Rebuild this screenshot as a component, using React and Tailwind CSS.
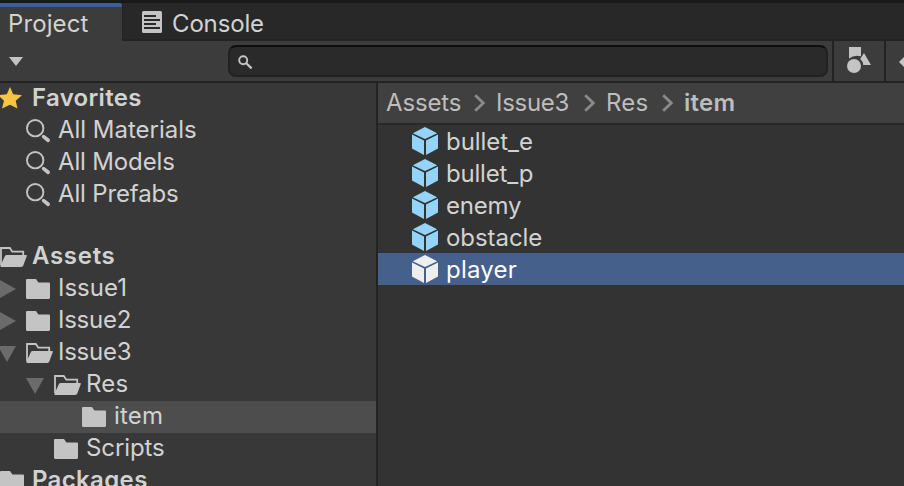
import React from 'react';

const Folder = () => (
  <svg width="24" height="20" viewBox="0 0 24 20" className="block shrink-0" fill="#c4c4c4">
    <path d="M1 0H10L12.4 3.6H23Q24 3.6 24 4.6V18.5Q24 20 22.5 20H1.5Q0 20 0 18.5V1Q0 0 1 0Z" />
  </svg>
);

const OpenFolder = () => (
  <svg width="27" height="20" viewBox="0 0 27 20" className="block shrink-0">
    <path d="M1 18V1H9.8L12.3 4.7H23.2V8" fill="none" stroke="#c4c4c4" strokeWidth="1.8" />
    <path d="M6.7 8H26Q27.2 8 26.8 9.1L23.3 18.6Q22.8 20 21.3 20H1.5Q0 20 .4 18.8L4.8 9.2Q5.4 8 6.7 8Z" fill="#c4c4c4" />
  </svg>
);

const Search = () => (
  <svg width="25" height="25" viewBox="0 0 25 25" className="block shrink-0" fill="none" stroke="#c4c4c4">
    <circle cx="9.2" cy="9.2" r="8.2" strokeWidth="1.9" />
    <path d="M17.6 17.6L22.1 21.3" strokeWidth="3.7" strokeLinecap="round" />
  </svg>
);

const Star = () => (
  <svg width="22" height="22" viewBox="0 0 22 22" className="block shrink-0" fill="#f7c443">
    <path d="M10 0L13.2 7.2L22 8.2L15.7 13.7L17.5 21.6L10 17.7L2 21.6L4 13.7L-2 8.2L6.8 7.2Z" />
  </svg>
);

const Cube = ({ color }) => (
  <svg width="26" height="28" viewBox="0 0 26 28" className="block shrink-0" fill={color}>
    <path d="M13 0L25.2 6.2L13 12.1L.8 6.2Z" />
    <path d="M0 7.6L12 13.6V28L0 21.6Z" />
    <path d="M26 7.6L14 13.6V28L26 21.6Z" />
  </svg>
);

const Chevron = () => (
  <svg width="12" height="18" viewBox="0 0 12 18" className="mt-[11px] block shrink-0" fill="none" stroke="#8a8a8a" strokeWidth="2.8">
    <path d="M1.2 1.2L9.3 9L1.2 16.8" />
  </svg>
);

const Arrow = ({ open }) =>
  open ? (
    <svg width="18" height="16" viewBox="0 0 18 16" className="block shrink-0" fill="#6b6b6b"><path d="M0 0H18L9 16Z" /></svg>
  ) : (
    <svg width="16" height="18" viewBox="0 0 16 18" className="block shrink-0" fill="#6b6b6b"><path d="M0 0L16 9L0 18Z" /></svg>
  );

const TreeRow = ({ icon, label, pad, iconTop = 'pt-[6px]', arrow, text = '', selected }) => (
  <div className={`flex h-8 shrink-0 items-start ${selected ? 'bg-[#4d4d4d]' : ''}`}>
    <div className={`flex shrink-0 items-start ${pad}`}>
      {arrow}
      <div className={`ml-auto flex w-8 shrink-0 ${iconTop}`}>{icon}</div>
    </div>
    <span className={`whitespace-nowrap leading-[30px] ${text}`}>{label}</span>
  </div>
);

const files = [
  ['bullet_e', 'tracking-[-0.05px]'],
  ['bullet_p', 'tracking-[-0.2px]'],
  ['enemy', 'tracking-[-0.2px]'],
  ['obstacle', 'tracking-[-0.05px]'],
  ['player', 'tracking-[0.2px]'],
];

export default function App() {
  return (
    <div className="flex h-[486px] w-[904px] flex-col overflow-hidden bg-[#383838] font-['Inter',sans-serif] text-[24px] text-[#d2d2d2]">
      <div className="h-[3px] shrink-0 bg-[#191919]" />
      <div className="flex h-[38px] shrink-0 bg-[#282828]">
        <div className="w-[123px] shrink-0 overflow-hidden rounded-tr-[3px] border-r border-[#232323] bg-[#3c3c3c]">
          <div className="h-1 bg-[#3a5f90]" />
          <div className="pl-2 leading-[33px] tracking-[0.1px]">Project</div>
        </div>
        <div className="flex grow border-b-2 border-[#232323]">
          <svg width="20" height="22" viewBox="0 0 20 22" className="ml-[19px] mt-2 block">
            <rect width="20" height="22" rx="1.5" fill="#c4c4c4" />
            <path d="M2 5H14M2 9H18M2 13H14M2 17H18" stroke="#282828" strokeWidth="2" />
          </svg>
          <span className="ml-[10px] leading-[41px] tracking-[-0.15px]">Console</span>
        </div>
      </div>
      <div className="flex h-[42px] shrink-0 border-b-2 border-[#232323] bg-[#3c3c3c]">
        <svg width="14" height="9" viewBox="0 0 14 9" className="ml-[9px] mt-4 block shrink-0"><path d="M0 0H14L7 9Z" fill="#c4c4c4" /></svg>
        <div className="ml-[205px] mt-1 h-8 w-[600px] shrink-0 rounded-[8px] border-2 border-[#212121] border-t-[#0d0d0d] bg-[#2a2a2a]">
          <svg width="15" height="15" viewBox="0 0 15 15" className="ml-2 mt-2 block" fill="none" stroke="#c4c4c4">
            <circle cx="5.2" cy="5.2" r="4" strokeWidth="1.9" />
            <path d="M8 8L13.6 13.4" strokeWidth="2.3" />
          </svg>
        </div>
        <div className="ml-1 h-10 w-[54px] shrink-0 border-x-2 border-[#232323]">
          <svg width="25" height="27" viewBox="0 0 25 27" className="ml-[13px] mt-[6px] block">
            <path d="M2 0H14V9.3Q7 7.5 2 11.5ZM17 6L24 18H16.3Q15.8 14 13.2 12Z" fill="#c4c4c4" />
            <circle cx="7" cy="19" r="7" fill="#c4c4c4" />
          </svg>
        </div>
        <svg width="18" height="14" viewBox="0 0 18 14" className="ml-[13px] mt-[14px] block shrink-0"><path d="M0 7L7 0H18V14H7Z" fill="#c4c4c4" /></svg>
      </div>
      <div className="flex min-h-0 grow">
        <div className="flex w-[376px] shrink-0 flex-col overflow-hidden">
          <TreeRow pad="w-8" iconTop="pt-1" icon={<Star />} label="Favorites" text="font-semibold tracking-[0.3px]" />
          <TreeRow pad="w-[58px]" iconTop="pt-1" icon={<Search />} label="All Materials" text="tracking-[-0.02px]" />
          <TreeRow pad="w-[58px]" iconTop="pt-1" icon={<Search />} label="All Models" text="tracking-[-0.15px]" />
          <TreeRow pad="w-[58px]" iconTop="pt-1" icon={<Search />} label="All Prefabs" text="tracking-[-0.15px]" />
          <div className="h-[30px] shrink-0" />
          <TreeRow pad="w-8" iconTop="pt-[6px] -ml-[2px]" icon={<OpenFolder />} label="Assets" text="font-semibold tracking-[0.7px]" />
          <TreeRow pad="w-[58px]" arrow={<div className="pt-[7px]"><Arrow /></div>} icon={<Folder />} label="Issue1" />
          <TreeRow pad="w-[58px]" arrow={<div className="pt-[7px]"><Arrow /></div>} icon={<Folder />} label="Issue2" text="tracking-[-0.25px]" />
          <TreeRow pad="w-[58px]" arrow={<div className="-ml-[2px] pt-[9px]"><Arrow open /></div>} icon={<OpenFolder />} label="Issue3" text="tracking-[-0.25px]" />
          <TreeRow pad="w-[86px]" arrow={<div className="pl-[26px] pt-[9px]"><Arrow open /></div>} icon={<OpenFolder />} label="Res" text="tracking-[0.2px]" />
          <TreeRow pad="w-[114px]" icon={<Folder />} label="item" text="tracking-[0.2px]" selected />
          <TreeRow pad="w-[86px]" icon={<Folder />} label="Scripts" text="tracking-[-0.1px]" />
          <TreeRow pad="w-8" iconTop="pt-[6px] -ml-[2px]" icon={<Folder />} label="Packages" text="font-semibold tracking-[0.35px]" />
        </div>
        <div className="flex min-w-0 grow flex-col border-l-2 border-[#232323] bg-[#333333]">
          <div className="flex h-[42px] shrink-0 border-b-2 border-[#282828] bg-[#404040] pl-2 leading-[40px] text-[#bdbdbd]">
            <span className="w-[88px] shrink-0 tracking-[-0.15px]">Assets</span>
            <Chevron />
            <span className="ml-[10px] w-[88px] shrink-0 tracking-[-0.3px]">Issue3</span>
            <Chevron />
            <span className="ml-[10px] w-[56px] shrink-0 tracking-[0.2px]">Res</span>
            <Chevron />
            <span className="ml-[10px] font-semibold tracking-[0.3px]">item</span>
          </div>
          {files.map(([name, track]) => (
            <div key={name} className={`flex h-8 shrink-0 pl-[34px] ${name === 'player' ? 'bg-[#46608c] text-white' : ''}`}>
              <div className="w-[34px] shrink-0 pt-[2px]"><Cube color={name === 'player' ? '#eeeeee' : '#94d4fa'} /></div>
              <span className={`leading-[34px] ${track}`}>{name}</span>
            </div>
          ))}
        </div>
      </div>
    </div>
  );
}
